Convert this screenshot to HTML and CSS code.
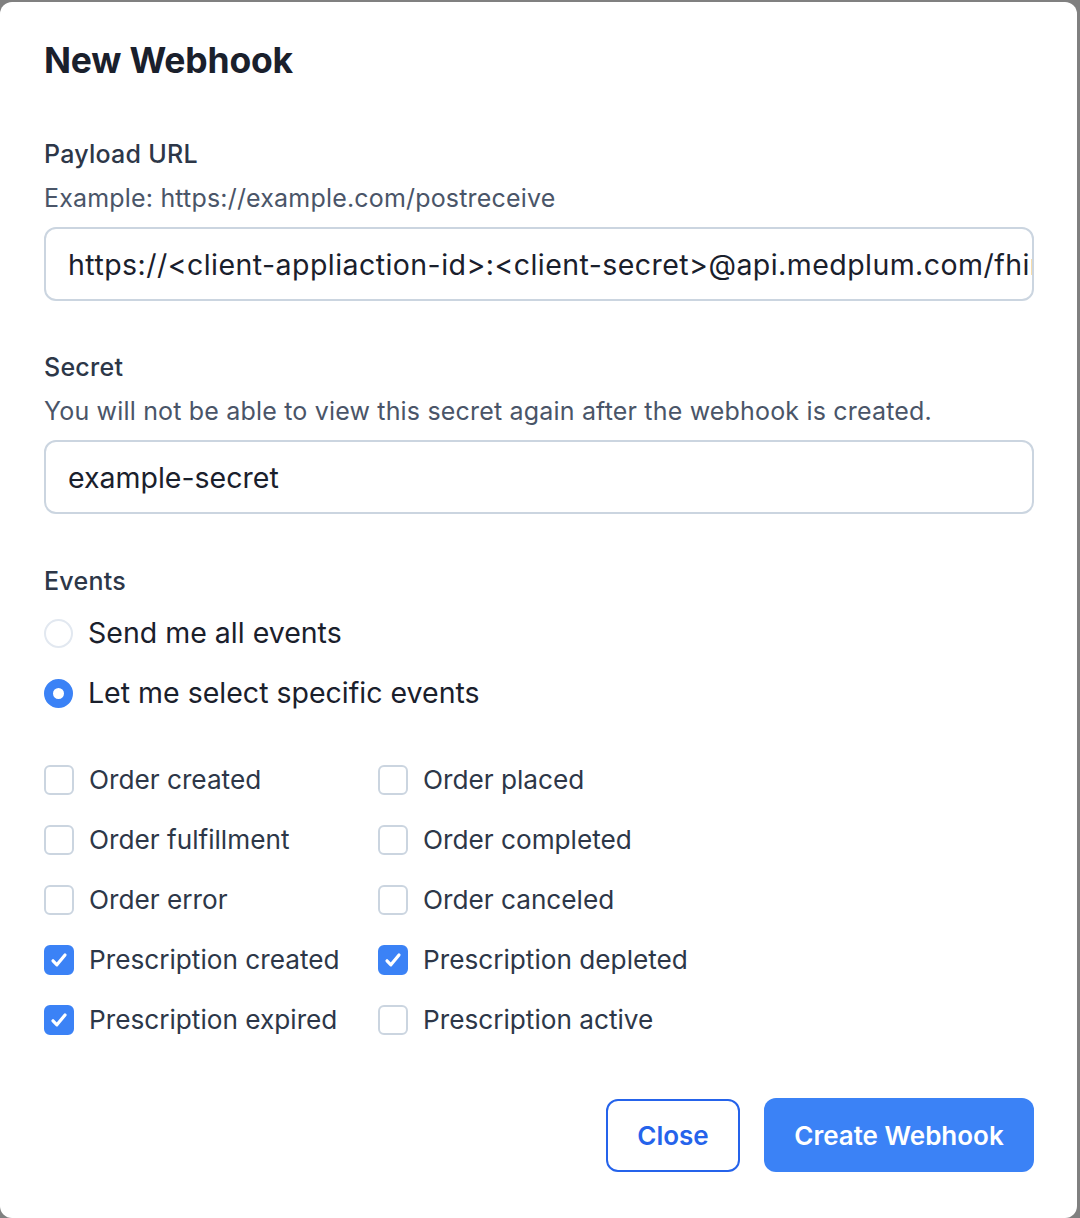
FILE: index.html
```html
<!DOCTYPE html>
<html>
<head>
<meta charset="utf-8">
<link rel="stylesheet" href="styles.css">
</head>
<body>
<div class="modal">
  <h1 class="title">New Webhook</h1>

  <div class="field first">
    <div class="label">Payload URL</div>
    <div class="desc">Example: https://example.com/postreceive</div>
    <input class="input input-url" type="text" readonly value="https://<client-appliaction-id>:<client-secret>@api.medplum.com/fhir/R4/Subscription">
  </div>

  <div class="field">
    <div class="label">Secret</div>
    <div class="desc">You will not be able to view this secret again after the webhook is created.</div>
    <input class="input" type="text" readonly value="example-secret">
  </div>

  <div class="field events">
    <div class="label">Events</div>
    <div class="radios">
      <div class="radio-row"><span class="radio"></span><span>Send me all events</span></div>
      <div class="radio-row"><span class="radio on"></span><span>Let me select specific events</span></div>
    </div>
  </div>

  <div class="checks">
    <div class="check-row"><span class="box"></span><span>Order created</span></div>
    <div class="check-row"><span class="box"></span><span>Order placed</span></div>
    <div class="check-row"><span class="box"></span><span>Order fulfillment</span></div>
    <div class="check-row"><span class="box"></span><span>Order completed</span></div>
    <div class="check-row"><span class="box"></span><span>Order error</span></div>
    <div class="check-row"><span class="box"></span><span>Order canceled</span></div>
    <div class="check-row"><span class="box on"><svg viewBox="0 0 30 30" width="30" height="30"><path d="M9 15.8 L12.9 19.8 L21 10" fill="none" stroke="#fff" stroke-width="3.2" stroke-linecap="round" stroke-linejoin="round"/></svg></span><span>Prescription created</span></div>
    <div class="check-row"><span class="box on"><svg viewBox="0 0 30 30" width="30" height="30"><path d="M9 15.8 L12.9 19.8 L21 10" fill="none" stroke="#fff" stroke-width="3.2" stroke-linecap="round" stroke-linejoin="round"/></svg></span><span>Prescription depleted</span></div>
    <div class="check-row"><span class="box on"><svg viewBox="0 0 30 30" width="30" height="30"><path d="M9 15.8 L12.9 19.8 L21 10" fill="none" stroke="#fff" stroke-width="3.2" stroke-linecap="round" stroke-linejoin="round"/></svg></span><span>Prescription expired</span></div>
    <div class="check-row"><span class="box"></span><span>Prescription active</span></div>
  </div>

  <div class="actions">
    <button class="btn btn-outline">Close</button>
    <button class="btn btn-primary">Create Webhook</button>
  </div>
</div>
</body>
</html>
```

FILE: styles.css
```css
html, body {
  margin: 0;
  padding: 0;
}
body {
  background: #808080;
  font-family: Inter, "Noto Sans", "Liberation Sans", sans-serif;
  width: 1080px;
  height: 1218px;
  overflow: hidden;
}
.modal {
  box-sizing: border-box;
  margin-top: 2px;
  width: 1077px;
  height: 1216px;
  background: #fff;
  border-radius: 12px;
  padding: 37px 44px 0 44px;
}
.title {
  margin: 0;
  font-size: 35.5px;
  line-height: 44px;
  font-weight: 700;
  color: #1a202c;
  letter-spacing: -0.2px;
}
.field {
  margin-top: 51px;
}
.field.first {
  margin-top: 56px;
}
.label {
  font-size: 25px;
  line-height: 30px;
  font-weight: 500;
  color: #2d3748;
  letter-spacing: 0.25px;
}
.desc {
  margin-top: 14px;
  font-size: 25px;
  line-height: 30px;
  color: #4a5568;
  letter-spacing: 0.18px;
}
.input {
  display: block;
  margin-top: 14px;
  box-sizing: border-box;
  width: 990px;
  height: 74px;
  border: 2px solid #cbd5e0;
  border-radius: 12px;
  padding: 0 0 0 22px;
  font-family: inherit;
  font-size: 28.5px;
  line-height: 70px;
  color: #1a202c;
  background: #fff;
  outline: none;
}
.input-url {
  letter-spacing: 0.45px;
}
.field.events {
  margin-top: 52px;
}
.radios {
  margin-top: 21px;
  display: flex;
  flex-direction: column;
  gap: 28px;
}
.radio-row {
  display: flex;
  align-items: center;
  gap: 15px;
  font-size: 28.5px;
  line-height: 32px;
  color: #1a202c;
}
.radio {
  box-sizing: border-box;
  width: 29px;
  height: 29px;
  border-radius: 50%;
  border: 2px solid #e2e8f0;
  background: #fff;
  flex: none;
}
.radio.on {
  border: 9px solid #3b82f6;
}
.checks {
  margin-top: 55px;
  display: grid;
  grid-template-columns: 334px 1fr;
  row-gap: 28px;
}
.check-row {
  display: flex;
  align-items: center;
  gap: 15px;
  font-size: 26.2px;
  line-height: 32px;
  color: #2d3748;
}
.box {
  box-sizing: border-box;
  width: 30px;
  height: 30px;
  border-radius: 6px;
  border: 2px solid #cbd5e0;
  background: #fff;
  flex: none;
  position: relative;
}
.box.on {
  background: #3b82f6;
  border-color: #3b82f6;
}
.box svg {
  position: absolute;
  left: -2px;
  top: -2px;
}
.actions {
  margin-top: 62px;
  margin-right: -1px;
  display: flex;
  justify-content: flex-end;
  gap: 24px;
}
.btn {
  font-family: inherit;
  font-size: 26px;
  font-weight: 600;
  height: 74px;
  border-radius: 12px;
  cursor: pointer;
}
.btn-outline {
  background: #fff;
  border: 2px solid #2563eb;
  color: #2563eb;
  width: 134px;
  height: 73px;
  margin-top: 1px;
}
.btn-primary {
  background: #3b82f6;
  border: none;
  color: #fff;
  width: 270px;
}
```
